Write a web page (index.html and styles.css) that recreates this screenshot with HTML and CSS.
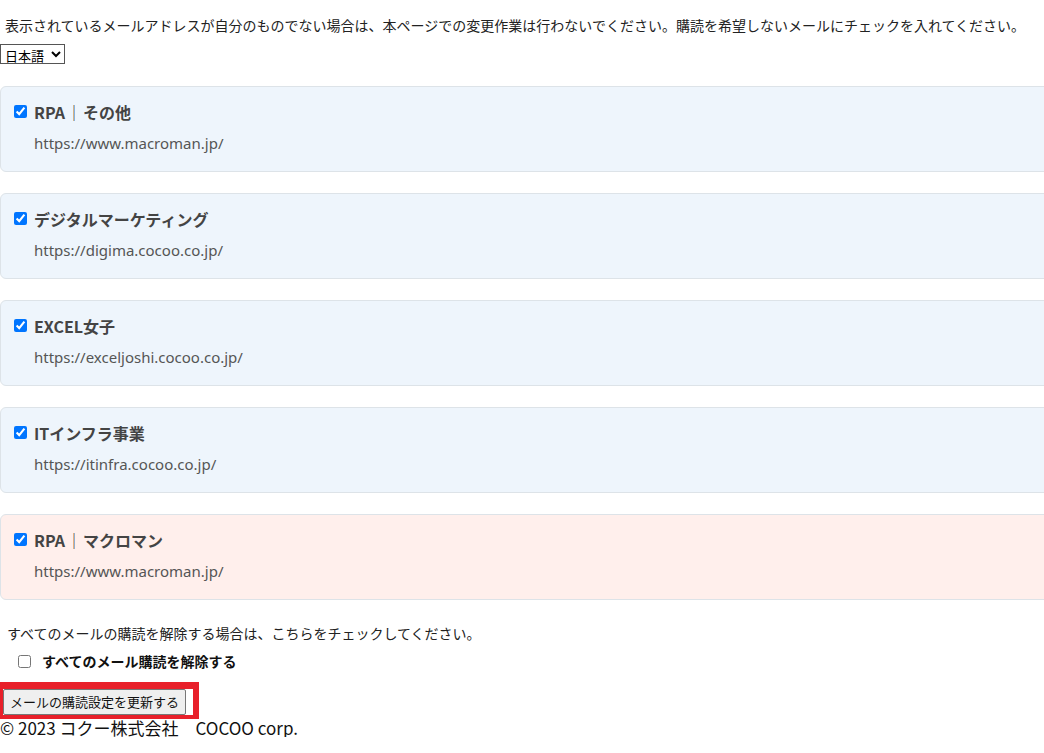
FILE: index.html
```html
<!DOCTYPE html>
<html lang="ja">
<head>
<meta charset="utf-8">
<title>メール購読設定</title>
<link rel="stylesheet" href="styles.css">
</head>
<body>
<p class="notice">表示されているメールアドレスが自分のものでない場合は、本ページでの変更作業は行わないでください。購読を希望しないメールにチェックを入れてください。</p>
<select class="lang"><option>日本語</option><option>English</option></select>
<div class="lists">
  <label class="card">
    <input type="checkbox" checked>
    <div class="card-body"><div class="title">RPA<span class="sep">｜</span>その他</div><div class="url">https://www.macroman.jp/</div></div>
  </label>
  <label class="card">
    <input type="checkbox" checked>
    <div class="card-body"><div class="title">デジタルマーケティング</div><div class="url">https://digima.cocoo.co.jp/</div></div>
  </label>
  <label class="card">
    <input type="checkbox" checked>
    <div class="card-body"><div class="title">EXCEL女子</div><div class="url">https://exceljoshi.cocoo.co.jp/</div></div>
  </label>
  <label class="card">
    <input type="checkbox" checked>
    <div class="card-body"><div class="title">ITインフラ事業</div><div class="url">https://itinfra.cocoo.co.jp/</div></div>
  </label>
  <label class="card card-pink">
    <input type="checkbox" checked>
    <div class="card-body"><div class="title">RPA<span class="sep">｜</span>マクロマン</div><div class="url">https://www.macroman.jp/</div></div>
  </label>
</div>
<p class="unsub-note">すべてのメールの購読を解除する場合は、こちらをチェックしてください。</p>
<label class="unsub"><input type="checkbox"><span>すべてのメール購読を解除する</span></label>
<div class="btn-wrap"><button type="button" class="submit">メールの購読設定を更新する</button></div>
<footer class="footer">© 2023 コクー株式会社　COCOO corp.</footer>
</body>
</html>
```
FILE: styles.css
```css
html { overflow: hidden; }
body {
  margin: 0;
  font-family: "Noto Sans CJK JP", "Noto Sans", sans-serif;
  color: #222;
  background: #fff;
}
.notice {
  margin: 0;
  padding: 14px 0 0 5px;
  font-size: 14px;
  line-height: 22px;
  height: 31px;
  box-sizing: border-box;
}
.lang {
  display: block;
  margin: 13px 0 0 0;
  height: 20px;
  width: 65px;
  font-size: 13px;
  font-family: "Noto Sans CJK JP", sans-serif;
  padding: 0;
  border: 1px solid #555;
  border-radius: 0;
  background: #fff;
  color: #000;
}
.lists {
  display: flex;
  flex-direction: column;
  gap: 21px;
  margin-top: 22px;
  width: calc(100% + 20px);
}
.card {
  display: flex;
  align-items: flex-start;
  box-sizing: border-box;
  height: 86px;
  padding: 17px 0 0 13px;
  background: #eef5fc;
  border: 1px solid #dde3e8;
  border-radius: 6px;
}
.card-pink { background: #ffefec; }
.card input {
  width: 13px;
  height: 13px;
  margin: 1px 7px 0 0;
}
.title {
  font-weight: 700;
  font-size: 16px;
  line-height: 16px;
  color: #444;
}
.sep {
  display: inline-block;
  width: 18px;
  text-align: center;
  font-weight: 400;
  color: #333;
}
.url {
  margin-top: 14px;
  font-family: "Noto Sans", "Noto Sans CJK JP", sans-serif;
  font-size: 15px;
  line-height: 18px;
  color: #555;
}
.unsub-note {
  margin: 24px 0 0 7px;
  font-size: 14px;
  line-height: 18px;
}
.unsub {
  display: flex;
  align-items: center;
  margin: 9px 0 0 18px;
  font-size: 14px;
  font-weight: 700;
  color: #111;
}
.unsub input {
  width: 13px;
  height: 13px;
  margin: 0 11px 0 0;
}
.btn-wrap {
  display: flex;
  width: fit-content;
  height: 26px;
  margin: 11px 0 0 -3px;
  padding: 0 7px 0 0;
  border: 6px solid #e8202a;
  border-top-width: 7px;
  border-bottom-width: 4px;
}
.submit {
  box-sizing: border-box;
  height: 26px;
  margin: 0;
  padding: 0 6px;
  font-size: 13px;
  font-family: "Noto Sans CJK JP", sans-serif;
  color: #111;
  background: #efefef;
  border: 1px solid #777;
  border-radius: 2px;
  line-height: 22px;
}
.footer {
  font-size: 17px;
  line-height: 18px;
  margin-top: 0;
  color: #111;
}
```
